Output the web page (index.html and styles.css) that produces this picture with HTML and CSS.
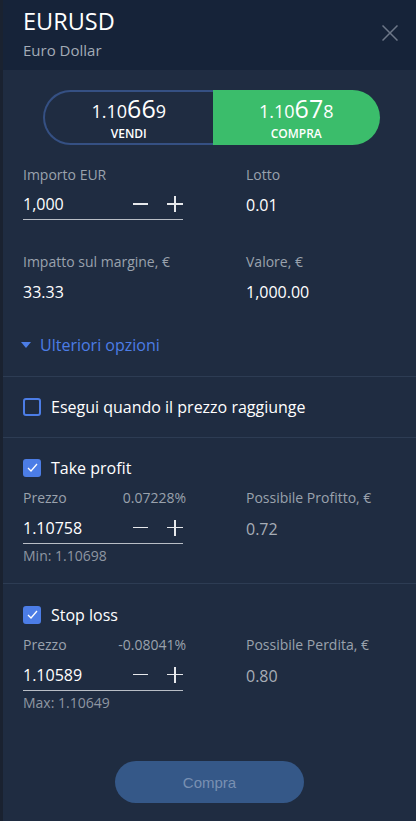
FILE: index.html
```html
<!DOCTYPE html>
<html lang="it">
<head>
<meta charset="utf-8">
<link rel="stylesheet" href="styles.css">
</head>
<body>
<div class="panel">
  <header class="head">
    <div class="titles">
      <div class="sym">EURUSD</div>
      <div class="name">Euro Dollar</div>
    </div>
    <svg class="close" width="16" height="16" viewBox="0 0 16 16"><path d="M0.5 0.5L15.5 15.5M15.5 0.5L0.5 15.5" stroke="#6d7788" stroke-width="1.5" fill="none"/></svg>
  </header>
  <main class="body">
    <div class="toggle">
      <div class="side sell">
        <div class="price">1.10<span class="big">66</span>9</div>
        <div class="lbl">VENDI</div>
      </div>
      <div class="side buy">
        <div class="price">1.10<span class="big">67</span>8</div>
        <div class="lbl">COMPRA</div>
      </div>
    </div>

    <div class="grid top">
      <div class="cell">
        <div class="label">Importo EUR</div>
        <div class="input"><span class="val">1,000</span><span class="steps"><span class="minus"></span><span class="plus"></span></span></div>
      </div>
      <div class="cell">
        <div class="label">Lotto</div>
        <div class="plain">0.01</div>
      </div>
      <div class="cell">
        <div class="label">Impatto sul margine, €</div>
        <div class="plain">33.33</div>
      </div>
      <div class="cell">
        <div class="label">Valore, €</div>
        <div class="plain">1,000.00</div>
      </div>
    </div>

    <div class="more"><span class="tri"></span>Ulteriori opzioni</div>

    <div class="sec check-row">
      <span class="box"></span><span class="ctext">Esegui quando il prezzo raggiunge</span>
    </div>

    <div class="sec tp">
      <div class="check-line"><span class="box on"><svg width="11" height="9" viewBox="0 0 11 9"><path d="M1 5L4 8L10 1" stroke="#fff" stroke-width="1.3" fill="none"/></svg></span><span class="ctext">Take profit</span></div>
      <div class="grid sub">
        <div class="cell">
          <div class="label split"><span>Prezzo</span><span>0.07228%</span></div>
          <div class="input"><span class="val">1.10758</span><span class="steps"><span class="minus"></span><span class="plus"></span></span></div>
          <div class="hint">Min: 1.10698</div>
        </div>
        <div class="cell">
          <div class="label">Possibile Profitto, €</div>
          <div class="plain dim">0.72</div>
        </div>
      </div>
    </div>

    <div class="sec sl">
      <div class="check-line"><span class="box on"><svg width="11" height="9" viewBox="0 0 11 9"><path d="M1 5L4 8L10 1" stroke="#fff" stroke-width="1.3" fill="none"/></svg></span><span class="ctext">Stop loss</span></div>
      <div class="grid sub">
        <div class="cell">
          <div class="label split"><span>Prezzo</span><span>-0.08041%</span></div>
          <div class="input"><span class="val">1.10589</span><span class="steps"><span class="minus"></span><span class="plus"></span></span></div>
          <div class="hint">Max: 1.10649</div>
        </div>
        <div class="cell">
          <div class="label">Possibile Perdita, €</div>
          <div class="plain dim">0.80</div>
        </div>
      </div>
    </div>

    <div class="foot"><button class="submit">Compra</button></div>
  </main>
</div>
</body>
</html>
```
FILE: styles.css
```css
* { box-sizing: border-box; }
html, body { margin: 0; padding: 0; }
body {
  width: 416px; height: 821px;
  background: #1f2c41;
  font-family: "Open Sans", "Noto Sans", sans-serif;
  color: #fff;
  overflow: hidden;
}
.panel {
  height: 821px;
  border-left: 3px solid #1a2230;
  display: flex; flex-direction: column;
}
.head {
  height: 70px; flex: none;
  background: #162339;
  display: flex; justify-content: space-between; align-items: flex-start;
  padding: 6px 18px 0 20px;
}
.sym { font-size: 23.5px; line-height: 30px; }
.name { font-size: 15px; color: #a3abb6; line-height: 20px; margin-top: 4px; }
.close { margin-top: 19px; }
.body { flex: 1; display: flex; flex-direction: column; background: #1f2c41; }
.toggle {
  margin: 20px 36px 0 40px;
  height: 55px;
  display: flex;
}
.side { flex: 1; display: flex; flex-direction: column; align-items: center; justify-content: center; }
.sell { border: 2px solid #355083; border-right: none; border-radius: 28px 0 0 28px; }
.buy { background: #3bbd6b; border-radius: 0 28px 28px 0; }
.price { font-size: 18px; line-height: 26px; height: 26px; margin-bottom: 6px; }
.price .big { font-size: 25px; line-height: 26px; }
.lbl { font-size: 12px; font-weight: 600; line-height: 14px; height: 14px; }

.grid { display: grid; grid-template-columns: 223px 1fr; padding-left: 20px; }
.top { margin-top: 19.5px; row-gap: 32px; }
.label { font-size: 14px; color: #9aa2ad; line-height: 19px; }
.input {
  width: 160px; height: 36.5px;
  border-bottom: 1px solid #b9bec6;
  display: flex; justify-content: space-between; align-items: flex-end;
  padding-bottom: 4px;
}
.val { font-size: 16px; line-height: 22px; }
.steps { display: flex; gap: 19px; align-items: center; height: 22px; }
.minus { display: block; width: 15px; height: 1.5px; background: #e6e8eb; }
.plus { display: block; width: 16px; height: 16px; position: relative; }
.plus::before, .plus::after { content: ""; position: absolute; background: #e6e8eb; }
.plus::before { left: 0; right: 0; top: 7px; height: 1.5px; }
.plus::after { top: 0; bottom: 0; left: 7px; width: 1.5px; }
.plain { font-size: 16px; line-height: 22px; margin-top: 10px; }
.plain.dim { color: #a7adb6; margin-top: 11px; }
.more {
  color: #4c7de6; font-size: 16px; line-height: 22px;
  padding: 30.5px 0 20px 18px;
  display: flex; align-items: center;
  border-bottom: 1px solid #2d3c53;
}
.tri { width: 0; height: 0; border-left: 5px solid transparent; border-right: 5px solid transparent; border-top: 6px solid #4c7de6; margin-right: 9px; }
.sec { border-bottom: 1px solid #2d3c53; }
.check-row { height: 61px; display: flex; align-items: center; padding-left: 20px; }
.box {
  width: 18px; height: 18px; border: 2px solid #4c7de6; border-radius: 3px;
  display: inline-flex; align-items: center; justify-content: center;
  margin-right: 10px; flex: none;
}
.box.on { background: #4c7de6; }
.ctext { font-size: 16px; line-height: 22px; }
.tp { height: 146px; padding-top: 19px; }
.sl { border-bottom: none; padding-top: 20px; }
.check-line { display: flex; align-items: center; padding-left: 20px; height: 22px; }
.sub { margin-top: 9.5px; }
.split { width: 163px; display: flex; justify-content: space-between; }
.hint { font-size: 14px; color: #8e96a2; line-height: 18px; margin-top: 3px; }
.foot { flex: 1; display: flex; justify-content: center; align-items: flex-end; padding-bottom: 18px; }
.submit {
  width: 189px; height: 42px; border: none; border-radius: 21px;
  background: #355888; color: #7990b2;
  font-family: "Liberation Sans", Arial, sans-serif; font-size: 15px;
}
```
